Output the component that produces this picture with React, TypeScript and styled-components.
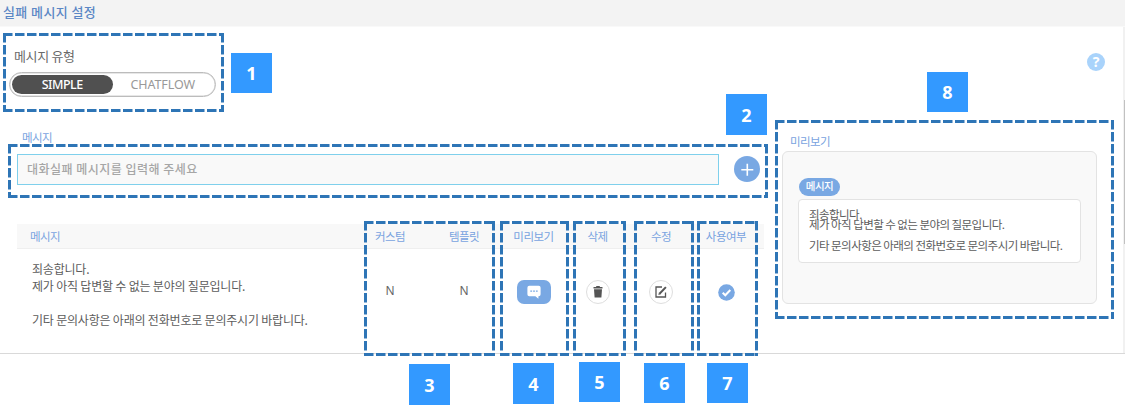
import React from "react";
import styled, { createGlobalStyle } from "styled-components";

const Global = createGlobalStyle`
  * { box-sizing: border-box; }
  body { margin: 0; background: #fff; font-family: "Noto Sans", "Noto Sans CJK KR", sans-serif; }
`;

const Page = styled.div`
  position: relative;
  width: 1125px;
  height: 411px;
  overflow: hidden;
`;

const Text = styled.span<{ $size: number; $color: string; $spacing?: number; $weight?: number }>`
  display: block;
  white-space: pre;
  font-family: "Noto Sans CJK KR", sans-serif;
  font-size: ${(p) => p.$size}px;
  font-weight: ${(p) => p.$weight ?? 400};
  letter-spacing: ${(p) => p.$spacing ?? 0}px;
  color: ${(p) => p.$color};
  line-height: 16px;
`;

const Panel = styled.section`
  height: 354px;
  border-bottom: 1px solid #d9d9d9;
`;

const TitleBar = styled.header`
  height: 27px;
  padding: 4px 3px;
  background: #f3f3f3;
  border-bottom: 1px solid #f9f9f9;
`;

const Columns = styled.div`
  display: flex;
`;

const Main = styled.main`
  width: 782px;
`;

const TypeField = styled.div`
  padding: 21px 0 0 9px;
`;

const TypeLabel = styled.div`
  height: 24px;
  padding-left: 5px;
`;

const Toggle = styled.div`
  display: flex;
  width: 207px;
  height: 25px;
  padding: 2px;
  border: 1px solid #bcbcbc;
  border-radius: 13px;
  box-shadow: inset 0 0 0 0.5px #d0d0d0;
`;

const Option = styled.button<{ $active?: boolean }>`
  width: 101px;
  height: 19px;
  padding: 0;
  border: 0;
  border-radius: 10px;
  background: ${(p) => (p.$active ? "#505050" : "transparent")};
  color: ${(p) => (p.$active ? "#fff" : "#999")};
  font: ${(p) => (p.$active ? 500 : 400)} 12.5px/18px "Noto Sans", sans-serif;
  letter-spacing: ${(p) => (p.$active ? -0.5 : -0.1)}px;
`;

const InputLabel = styled.div`
  margin-top: 32px;
  padding-left: 22px;
  height: 24px;
`;

const InputRow = styled.div`
  display: flex;
  align-items: center;
  gap: 15px;
  height: 32px;
  margin-left: 17px;
`;

const Input = styled.div`
  display: flex;
  align-items: center;
  width: 702px;
  height: 31px;
  padding-left: 9px;
  border: 1px solid #7fd0ec;
  background: #f9f9f9;
`;

const AddButton = styled.button`
  width: 26px;
  height: 26px;
  padding: 0;
  border: 0;
  border-radius: 50%;
  background: #79a8e3;
  svg { display: block; }
`;

const Table = styled.div`
  width: 747px;
  margin: 39px 0 0 17px;
`;

const Row = styled.div<{ $head?: boolean }>`
  display: grid;
  grid-template-columns: 336px 74px 74px 65px 63px 64px 66px;
  align-items: center;
  height: ${(p) => (p.$head ? 25 : 86)}px;
  background: ${(p) => (p.$head ? "#f8f8f8" : "transparent")};
  border-bottom: ${(p) => (p.$head ? "1px solid #efefef" : "0")};
`;

const Cell = styled.div<{ $pad?: number }>`
  display: flex;
  flex-direction: column;
  align-items: ${(p) => (p.$pad ? "flex-start" : "center")};
  padding-left: ${(p) => p.$pad ?? 0}px;
`;

const Flag = styled.span`
  font: 400 12px/16px "Noto Sans", sans-serif;
  color: #666;
  margin-top: -3px;
`;

const MessageLines = styled.div`
  padding-top: 4px;
  & > span { line-height: 17px; height: 17px; }
`;

const ChatButton = styled.button`
  display: flex;
  align-items: center;
  justify-content: center;
  width: 34px;
  height: 24px;
  padding: 0;
  border: 0;
  border-radius: 7px;
  background: #79a8e3;
`;

const RoundButton = styled.button`
  display: flex;
  align-items: center;
  justify-content: center;
  width: 24px;
  height: 24px;
  padding: 0;
  border: 1px solid #dedede;
  border-radius: 50%;
  background: #fff;
`;

const Side = styled.aside`
  padding-top: 106px;
`;

const SideLabel = styled.div`
  height: 18px;
  padding-left: 8px;
`;

const PreviewCard = styled.div`
  width: 315px;
  height: 153px;
  padding: 26px 0 0 16px;
  border: 1px solid #e3e3e3;
  border-radius: 6px;
  background: #f9f9f9;
`;

const Pill = styled.div`
  display: flex;
  justify-content: center;
  width: 41px;
  height: 18px;
  border-radius: 9px;
  background: #79a8e3;
`;

const Bubble = styled.div`
  width: 283px;
  height: 64px;
  margin: 3px 0 0 -1px;
  padding: 9px 0 0 10px;
  border: 1px solid #e3e3e3;
  border-radius: 4px;
  background: #fff;
  & > span { line-height: 10.4px; height: 10.4px; }
`;

const Help = styled.div`
  position: absolute;
  left: 1087px;
  top: 53px;
  width: 18px;
  height: 18px;
  border-radius: 50%;
  background: #a9d3fb;
  color: #fff;
  text-align: center;
  font: 700 14px/18px "Noto Sans", sans-serif;
`;

const Scrollbar = styled.div`
  position: absolute;
  right: 0;
  top: 27px;
  width: 2px;
  height: 326px;
  padding: 73px 0 0 1px;
  background: #f1f1f1;
`;

const Thumb = styled.div`
  height: 144px;
  background: #c1c1c1;
`;

const Outline = styled.svg<{ $x: number; $y: number }>`
  position: absolute;
  left: ${(p) => p.$x}px;
  top: ${(p) => p.$y}px;
  fill: none;
  stroke: #2e75b6;
  stroke-width: 3;
  stroke-dasharray: 9.5 2.5;
`;

const Marker = styled.div<{ $x: number; $y: number; $h: number }>`
  position: absolute;
  left: ${(p) => p.$x}px;
  top: ${(p) => p.$y}px;
  width: 41px;
  height: ${(p) => p.$h}px;
  background: #3399ff;
  color: #fff;
  text-align: center;
  font: 700 18px/${(p) => p.$h + 1}px "Noto Sans", sans-serif;
`;

const BLUE = "#79a3e0";
const GRAY = "#5c5c5c";

const outlines = [
  [3, 33, 221, 79],
  [8, 144, 760, 54],
  [364, 221, 131, 135],
  [500, 221, 69, 135],
  [573, 221, 53, 135],
  [634, 221, 60, 135],
  [697, 221, 61, 135],
  [775, 120, 339, 199],
];

const markers = [
  [231, 53, 40],
  [726, 94, 41],
  [409, 364, 41],
  [513, 363, 41],
  [579, 362, 40],
  [644, 363, 40],
  [707, 363, 40],
  [927, 72, 40],
];

const heads = ["커스텀", "템플릿", "미리보기", "삭제", "수정", "사용여부"];

const lines = [
  "죄송합니다.",
  "제가 아직 답변할 수 없는 분야의 질문입니다.",
  " ",
  "기타 문의사항은 아래의 전화번호로 문의주시기 바랍니다.",
];

const ChatIcon = () => (
  <svg width="14" height="14" viewBox="0 0 14 14">
    <path d="M2.300 .7h9.400A2 2 0 0 1 13.600 2.700v6.600a2 2 0 0 1-1.900 2H11.400v2.500L8.400 11.300H2.300A2 2 0 0 1 .4 9.300V2.700A2 2 0 0 1 2.300 .7z" fill="#fff" />
    <path d="M3.300 6.200h1.800M6.100 6.200h1.800M8.900 6.200h1.800" stroke="#79a8e3" strokeWidth="1.200" />
  </svg>
);

const TrashIcon = () => (
  <svg width="10" height="12" viewBox="0 0 10 12" fill="#555">
    <path d="M3.200 0h3.600v1H9.500v1.600H.5V1h2.700zM1 3.300h8l-.6 8.200H1.600z" />
  </svg>
);

const EditIcon = () => (
  <svg width="14" height="14" viewBox="0 0 14 14" fill="none" stroke="#555">
    <path d="M8 2H2v10h9.500V7.500" strokeWidth="1.300" />
    <path d="M5.500 8.700 11.900 2.100" strokeWidth="2" />
    <path d="M4.400 9.900l.5-2.200 1.700 1.600z" fill="#555" stroke="none" />
  </svg>
);

const CheckIcon = () => (
  <svg width="17" height="17" viewBox="0 0 17 17">
    <circle cx="8.500" cy="8.500" r="8.300" fill="#79a8e3" />
    <path d="M4.700 8.700l2.600 2.600 5-5.300" fill="none" stroke="#fff" strokeWidth="2" />
  </svg>
);

export default function App() {
  return (
    <Page>
      <Global />
      <Panel>
        <TitleBar>
          <Text $size={13} $color="#5b87c5" $spacing={0.4} $weight={500}>실패 메시지 설정</Text>
        </TitleBar>
        <Columns>
          <Main>
            <TypeField>
              <TypeLabel>
                <Text $size={13} $color="#6a6a6a" $spacing={-0.35}>메시지 유형</Text>
              </TypeLabel>
              <Toggle>
                <Option $active>SIMPLE</Option>
                <Option>CHATFLOW</Option>
              </Toggle>
            </TypeField>
            <InputLabel>
              <Text $size={11.5} $color={BLUE} $spacing={-0.6}>메시지</Text>
            </InputLabel>
            <InputRow>
              <Input>
                <Text $size={12} $color="#a6a6a6" $spacing={0.48} $weight={500}>대화실패 메시지를 입력해 주세요</Text>
              </Input>
              <AddButton>
                <svg width="26" height="26" viewBox="0 0 26 26">
                  <path d="M13.300 7.700v12M7.300 13.700h12" stroke="#fff" strokeWidth="1.600" />
                </svg>
              </AddButton>
            </InputRow>
            <Table>
              <Row $head>
                <Cell $pad={13}>
                  <Text $size={11.5} $color={BLUE} $spacing={-0.6}>메시지</Text>
                </Cell>
                {heads.map((h) => (
                  <Cell key={h}>
                    <Text $size={11.5} $color={BLUE} $spacing={-0.5}>{h}</Text>
                  </Cell>
                ))}
              </Row>
              <Row>
                <Cell $pad={15}>
                  <MessageLines>
                    {lines.map((l) => (
                      <Text key={l} $size={12} $color={GRAY} $spacing={-0.2}>{l}</Text>
                    ))}
                  </MessageLines>
                </Cell>
                <Cell><Flag>N</Flag></Cell>
                <Cell><Flag>N</Flag></Cell>
                <Cell><ChatButton><ChatIcon /></ChatButton></Cell>
                <Cell><RoundButton><TrashIcon /></RoundButton></Cell>
                <Cell><RoundButton><EditIcon /></RoundButton></Cell>
                <Cell><CheckIcon /></Cell>
              </Row>
            </Table>
          </Main>
          <Side>
            <SideLabel>
              <Text $size={11.5} $color={BLUE} $spacing={-0.6}>미리보기</Text>
            </SideLabel>
            <PreviewCard>
              <Pill>
                <Text $size={10.5} $color="#fff" $spacing={-0.5} $weight={500}>메시지</Text>
              </Pill>
              <Bubble>
                {lines.map((l) => (
                  <Text key={l} $size={11.5} $color={GRAY} $spacing={-0.55}>{l}</Text>
                ))}
              </Bubble>
            </PreviewCard>
          </Side>
        </Columns>
      </Panel>
      <Help>?</Help>
      <Scrollbar><Thumb /></Scrollbar>
      {outlines.map(([x, y, w, h]) => (
        <Outline key={x} $x={x} $y={y} width={w} height={h}>
          <path d={`M1.500 0V${h}M0 1.500H${w}M${w - 1.5} 0V${h}M0 ${h - 1.5}H${w}`} />
        </Outline>
      ))}
      {markers.map(([x, y, h], i) => (
        <Marker key={x} $x={x} $y={y} $h={h}>{i + 1}</Marker>
      ))}
    </Page>
  );
}
